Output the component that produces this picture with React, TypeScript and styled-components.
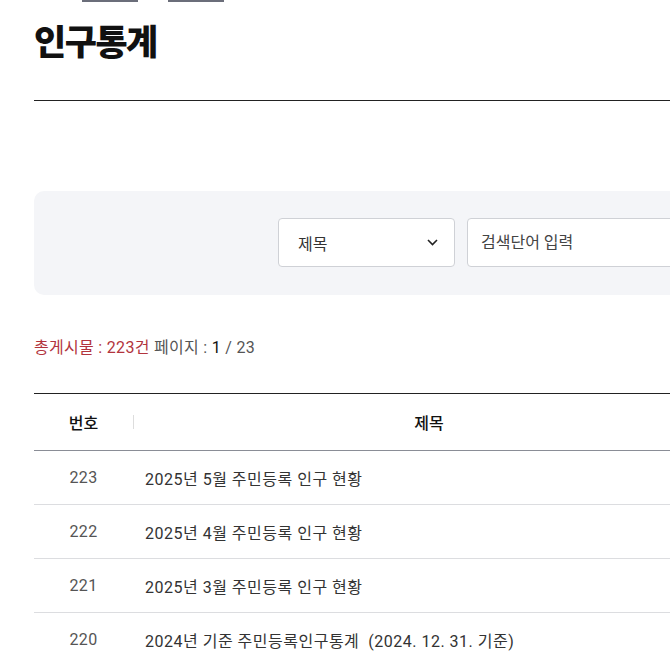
import React from 'react';
import styled, { createGlobalStyle } from 'styled-components';

const GlobalStyle = createGlobalStyle`
	html, body {
		margin: 0;
		padding: 0;
		overflow: hidden;
		background: #fff;
	}
	body {
		font-family: 'Roboto', 'Noto Sans CJK KR', sans-serif;
		color: #333;
	}
`;

const Page = styled.div`
	width: 1300px;
	padding-left: 34px;
	box-sizing: border-box;
`;

const TopTabs = styled.div`
	display: flex;
	gap: 30px;
	height: 2px;
	padding-left: 48px;
`;

const TabEdge = styled.span`
	display: block;
	width: 56px;
	height: 2px;
	background: #6b6e7a;
`;

const TitleBar = styled.div`
	padding-top: 18px;
	padding-bottom: 40px;
	border-bottom: 1px solid #222;
`;

const Heading = styled.h2`
	margin: 0;
	font-family: 'Noto Sans CJK KR', sans-serif;
	font-size: 35px;
	line-height: 40px;
	font-weight: 900;
	letter-spacing: -1.5px;
	color: #111;
`;

const SearchBox = styled.form`
	margin-top: 90px;
	display: flex;
	gap: 12px;
	padding: 27px 0 28px 244px;
	background: #f4f5f8;
	border-radius: 10px;
`;

const SelectBox = styled.div`
	display: flex;
	align-items: center;
	justify-content: space-between;
	width: 177px;
	height: 49px;
	box-sizing: border-box;
	padding: 0 16px 0 19px;
	background: #fff;
	border: 1px solid #cfd1d6;
	border-radius: 4px;
	font-size: 16px;
	color: #333;
`;

const SearchInput = styled.input`
	width: 420px;
	height: 49px;
	box-sizing: border-box;
	padding: 0 13px;
	background: #fff;
	border: 1px solid #cfd1d6;
	border-radius: 4px;
	font-family: inherit;
	font-size: 16px;
	outline: none;
	&::placeholder {
		color: #444;
	}
`;

const Summary = styled.p`
	margin: 41px 0 0;
	font-size: 16px;
	line-height: 24px;
	color: #555;
	letter-spacing: 0.3px;
`;

const Total = styled.span`
	color: #b2343d;
`;

const Current = styled.span`
	color: #111;
`;

const Table = styled.table`
	margin-top: 33px;
	width: 691px;
	border-collapse: collapse;
	border-top: 1px solid #222;
	font-size: 16px;
`;

const HeadCell = styled.th<{ $width?: number; $divider?: boolean }>`
	position: relative;
	width: ${(p) => (p.$width ? `${p.$width}px` : 'auto')};
	height: 56px;
	padding: 0;
	font-weight: 500;
	color: #111;
	text-align: center;
	border-bottom: 1px solid #8a8d96;
	&::before {
		content: '';
		display: ${(p) => (p.$divider ? 'block' : 'none')};
		position: absolute;
		left: 0;
		top: 21px;
		width: 1px;
		height: 14px;
		background: #ddd;
	}
`;

const Row = styled.tr`
	border-bottom: 1px solid #dcdde0;
`;

const NumCell = styled.td`
	height: 53px;
	padding: 0;
	text-align: center;
	color: #555;
	letter-spacing: 0.3px;
`;

const TitleCell = styled.td`
	padding: 0 12px;
	color: #333;
	white-space: pre;
	letter-spacing: 0.5px;
`;

const Chevron = () => (
	<svg width="11" height="7" viewBox="0 0 11 7" fill="none">
		<path d="M1 1l4.5 4.5L10 1" stroke="#222" strokeWidth="1.6" />
	</svg>
);

const posts = [
	{ no: 223, title: '2025년 5월 주민등록 인구 현황' },
	{ no: 222, title: '2025년 4월 주민등록 인구 현황' },
	{ no: 221, title: '2025년 3월 주민등록 인구 현황' },
	{ no: 220, title: '2024년 기준 주민등록인구통계  (2024. 12. 31. 기준)' },
];

export default function App() {
	return (
		<>
			<GlobalStyle />
			<Page>
				<TopTabs>
					<TabEdge />
					<TabEdge />
				</TopTabs>
				<TitleBar>
					<Heading>인구통계</Heading>
				</TitleBar>
				<SearchBox onSubmit={(e) => e.preventDefault()}>
					<SelectBox>
						<span>제목</span>
						<Chevron />
					</SelectBox>
					<SearchInput placeholder="검색단어 입력" />
				</SearchBox>
				<Summary>
					<Total>총게시물 : 223건</Total> 페이지 : <Current>1</Current> / 23
				</Summary>
				<Table>
					<thead>
						<tr>
							<HeadCell $width={99}>번호</HeadCell>
							<HeadCell $divider>제목</HeadCell>
						</tr>
					</thead>
					<tbody>
						{posts.map((post) => (
							<Row key={post.no}>
								<NumCell>{post.no}</NumCell>
								<TitleCell>{post.title}</TitleCell>
							</Row>
						))}
					</tbody>
				</Table>
			</Page>
		</>
	);
}
